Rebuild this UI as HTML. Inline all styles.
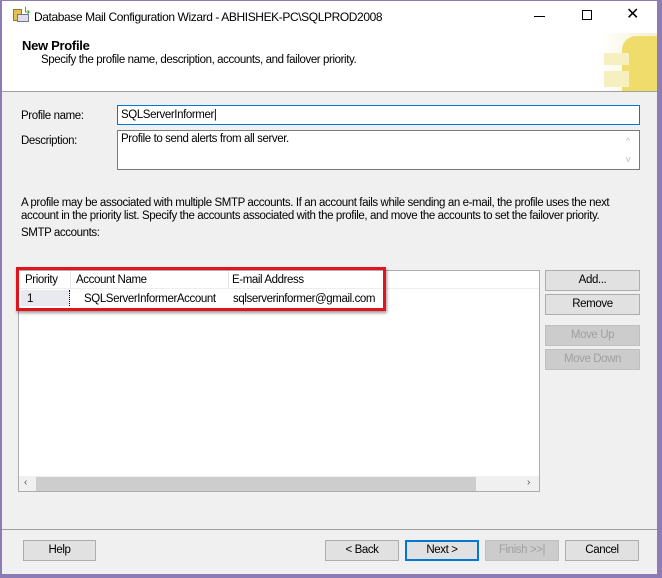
<!DOCTYPE html>
<html><head><style>
*{box-sizing:border-box;margin:0;padding:0}
body{width:662px;height:578px;overflow:hidden;background:#8d7bb5;font-family:"Liberation Sans",sans-serif;font-size:11.5px;color:#000;position:relative}
.win{position:absolute;left:2px;top:1px;width:655px;height:573px;background:#f0f0f0}
.abs{position:absolute;white-space:nowrap}
.btn{position:absolute;height:21px;border:1px solid #adadad;background:#e1e1e1;text-align:center;line-height:19px;font-size:11.5px}
.dis{color:#a0a0a0;background:#cccccc;border-color:#bfbfbf}
.c{letter-spacing:-0.4px}
</style></head><body>
<div class="win">
<div class="abs" style="left:0;top:0;width:655px;height:90px;background:#fff"></div>
<div class="abs" style="left:0;top:90px;width:655px;height:1px;background:#a0a0a0"></div>
<div class="abs" style="left:11px;top:8px;width:9px;height:12px;background:#e8c050;border:1px solid #8a7a40"></div>
<div class="abs" style="left:15px;top:13px;width:12px;height:8px;background:#dde;border:1px solid #778"></div>
<div class="abs" style="left:21px;top:5px;color:#2a9a2a;font-size:10px">↳</div>
<div class="abs c" style="left:32px;top:9px;font-size:12px">Database Mail Configuration Wizard - ABHISHEK-PC\SQLPROD2008</div>
<div class="abs" style="left:532px;top:15px;width:11px;height:1px;background:#000"></div>
<div class="abs" style="left:580px;top:9px;width:10px;height:10px;border:1px solid #000"></div>
<div class="abs" style="left:624px;top:3px;font-size:16px">✕</div>
<div class="abs" style="left:20px;top:37px;font-size:13px;font-weight:bold;letter-spacing:-0.3px">New Profile</div>
<div class="abs c" style="left:39px;top:53px">Specify the profile name, description, accounts, and failover priority.</div>
<div class="abs" style="left:597px;top:32px;width:58px;height:58px;background:linear-gradient(90deg,#fff,#f5f0d0)"></div>
<div class="abs" style="left:620px;top:35px;width:35px;height:55px;background:#f0dc6a;border-radius:14px 0 0 0"></div>
<div class="abs" style="left:602px;top:52px;width:25px;height:12px;background:#f6efc0"></div>
<div class="abs" style="left:602px;top:70px;width:25px;height:16px;background:#f6efc0"></div>

<div class="abs c" style="left:19px;top:109px">Profile name:</div>
<div class="abs" style="left:115px;top:104px;width:523px;height:20px;background:#fff;border:1px solid #0078d7"></div>
<div class="abs c" style="left:119px;top:108px">SQLServerInformer|</div>
<div class="abs c" style="left:19px;top:134px">Description:</div>
<div class="abs" style="left:115px;top:129px;width:523px;height:40px;background:#fff;border:1px solid #7a7a7a"></div>
<div class="abs c" style="left:119px;top:132px">Profile to send alerts from all server.</div>
<div class="abs" style="left:624px;top:135px;color:#bbb;font-size:9px">^</div>
<div class="abs" style="left:624px;top:153px;color:#bbb;font-size:9px">v</div>
<div class="abs c" style="left:19px;top:196px">A profile may be associated with multiple SMTP accounts. If an account fails while sending an e-mail, the profile uses the next</div>
<div class="abs c" style="left:19px;top:209px">account in the priority list. Specify the accounts associated with the profile, and move the accounts to set the failover priority.</div>
<div class="abs c" style="left:19px;top:226px">SMTP accounts:</div>
<div class="abs" style="left:16px;top:269px;width:522px;height:222px;background:#fff;border:1px solid #adadad"></div>
<div class="abs" style="left:17px;top:287px;width:520px;height:1px;background:#eee"></div>
<div class="abs" style="left:68px;top:270px;width:1px;height:17px;background:#e5e5e5"></div>
<div class="abs" style="left:226px;top:270px;width:1px;height:17px;background:#e5e5e5"></div>
<div class="abs c" style="left:23px;top:273px">Priority</div>
<div class="abs c" style="left:74px;top:273px">Account Name</div>
<div class="abs c" style="left:230px;top:273px">E-mail Address</div>
<div class="abs" style="left:19px;top:289px;width:49px;height:16px;background:#e8eaf0;border-right:1px dotted #000"></div>
<div class="abs c" style="left:25px;top:292px">1</div>
<div class="abs c" style="left:82px;top:292px">SQLServerInformerAccount</div>
<div class="abs c" style="left:231px;top:292px">sqlserverinformer@gmail.com</div>
<div class="abs" style="left:17px;top:475px;width:520px;height:15px;background:#f0f0f0"></div>
<div class="abs" style="left:34px;top:476px;width:440px;height:14px;background:#cdcdcd"></div>
<div class="abs" style="left:22px;top:476px;font-size:10px;color:#555">‹</div>
<div class="abs" style="left:525px;top:476px;font-size:10px;color:#555">›</div>
<div class="abs" style="left:14px;top:266px;width:370px;height:44px;border:3px solid #e0141c;box-shadow:1px 2px 3px rgba(0,0,0,.4)"></div>
<div class="btn c" style="left:543px;top:269px;width:95px">Add...</div>
<div class="btn c" style="left:543px;top:293px;width:95px">Remove</div>
<div class="btn c dis" style="left:543px;top:324px;width:95px">Move Up</div>
<div class="btn c dis" style="left:543px;top:348px;width:95px">Move Down</div>
<div class="abs" style="left:0;top:528px;width:655px;height:1px;background:#a0a0a0"></div>
<div class="btn c" style="left:21px;top:539px;width:73px">Help</div>
<div class="btn c" style="left:323px;top:539px;width:74px">&lt; Back</div>
<div class="btn c" style="left:403px;top:539px;width:74px;border:2px solid #0078d7;line-height:17px">Next &gt;</div>
<div class="btn c dis" style="left:483px;top:539px;width:74px">Finish &gt;&gt;|</div>
<div class="btn c" style="left:563px;top:539px;width:74px">Cancel</div>
</div>
</body></html>
